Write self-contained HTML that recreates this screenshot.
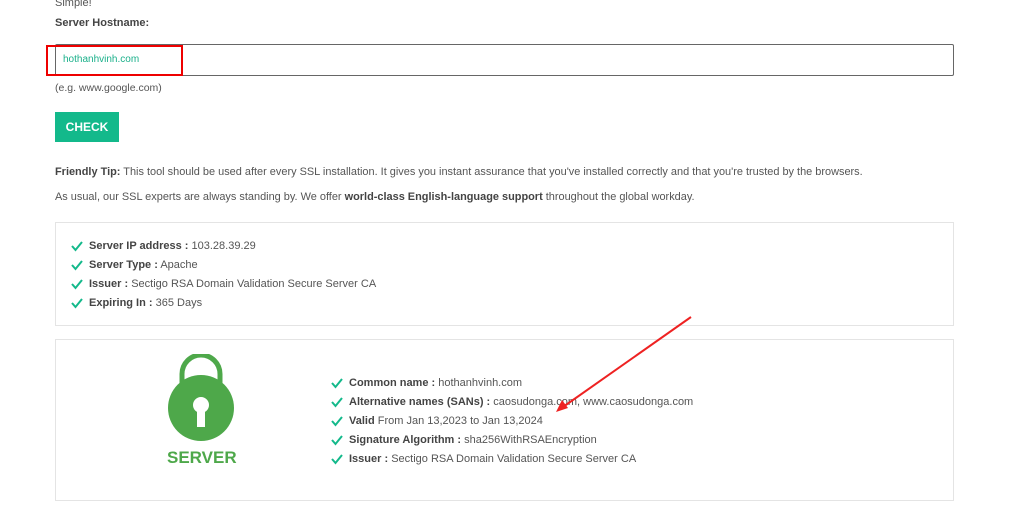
<!DOCTYPE html><html><head><style>
body{margin:0;width:1024px;height:508px;background:#fff;font-family:"Liberation Sans",sans-serif;font-size:11px;color:#555;position:relative;overflow:hidden}
.a{position:absolute;white-space:nowrap}
b{color:#444}
.box{position:absolute;border:1px solid #e4e4e4;left:55px;width:897px}
.ck{position:absolute;left:0}
.li{position:absolute;white-space:nowrap}
</style></head><body>
<div class="a" style="left:55px;top:-3px">Simple!</div>
<div class="a" style="left:55px;top:17px;font-weight:bold;color:#444">Server Hostname:</div>
<div style="position:absolute;left:55px;top:44px;width:897px;height:30px;border:1px solid #666;border-radius:2px"></div>
<div style="position:absolute;left:46px;top:45px;width:133px;height:27px;border:2px solid #e00"></div>
<div class="a" style="left:63px;top:54px;color:#1ab08a;font-size:10px">hothanhvinh.com</div>
<div class="a" style="left:55px;top:82px;font-size:10.5px">(e.g. www.google.com)</div>
<div style="position:absolute;left:55px;top:112px;width:64px;height:30px;background:#13b98b;color:#fff;font-weight:bold;font-size:12px;line-height:30px;text-align:center">CHECK</div>
<div class="a" style="left:55px;top:166px;font-size:10.95px"><b>Friendly Tip:</b> This tool should be used after every SSL installation. It gives you instant assurance that you've installed correctly and that you're trusted by the browsers.</div>
<div class="a" style="left:55px;top:191px;font-size:10.95px">As usual, our SSL experts are always standing by. We offer <b>world-class English-language support</b> throughout the global workday.</div>
<div class="box" style="top:222px;height:102px">
<div style="position:absolute;left:15px;top:17px">
<svg class="ck" width="12" height="80" viewBox="0 0 12 80" fill="none" stroke="#13b98b" stroke-width="2"><path d="M1 6l3.5 4L11 2M1 25l3.5 4L11 21M1 44l3.5 4L11 40M1 63l3.5 4L11 59"/></svg>
<div class="li" style="left:18px;top:0"><b>Server IP address :</b> 103.28.39.29</div>
<div class="li" style="left:18px;top:19px"><b>Server Type :</b> Apache</div>
<div class="li" style="left:18px;top:38px"><b>Issuer :</b> Sectigo RSA Domain Validation Secure Server CA</div>
<div class="li" style="left:18px;top:57px"><b>Expiring In :</b> 365 Days</div>
</div></div>
<div class="box" style="top:339px;height:160px">
<svg style="position:absolute;left:100px;top:14px" width="100" height="100" viewBox="0 0 100 100"><path d="M26 38V20a19 19 0 0 1 38 0V38" fill="none" stroke="#4ea84a" stroke-width="5"/><circle cx="45" cy="54" r="33" fill="#4ea84a"/><circle cx="45" cy="51" r="8" fill="#fff"/><rect x="41" y="52" width="8" height="21" fill="#fff"/></svg>
<div class="a" style="left:111px;top:108px;font-weight:bold;font-size:17px;color:#4ea84a">SERVER</div>
<div style="position:absolute;left:275px;top:37px">
<svg class="ck" width="12" height="100" viewBox="0 0 12 100" fill="none" stroke="#13b98b" stroke-width="2"><path d="M1 6l3.5 4L11 2M1 25l3.5 4L11 21M1 44l3.5 4L11 40M1 63l3.5 4L11 59M1 82l3.5 4L11 78"/></svg>
<div class="li" style="left:18px;top:0"><b>Common name :</b> hothanhvinh.com</div>
<div class="li" style="left:18px;top:19px"><b>Alternative names (SANs) :</b> caosudonga.com, www.caosudonga.com</div>
<div class="li" style="left:18px;top:38px"><b>Valid</b> From Jan 13,2023 to Jan 13,2024</div>
<div class="li" style="left:18px;top:57px"><b>Signature Algorithm :</b> sha256WithRSAEncryption</div>
<div class="li" style="left:18px;top:76px"><b>Issuer :</b> Sectigo RSA Domain Validation Secure Server CA</div>
</div></div>
<svg style="position:absolute;left:0;top:0" width="1024" height="508"><line x1="691" y1="317" x2="563" y2="407" stroke="#e22" stroke-width="2"/><path d="M556 412l6-12 6 8z" fill="#e22"/></svg>
</body></html>
